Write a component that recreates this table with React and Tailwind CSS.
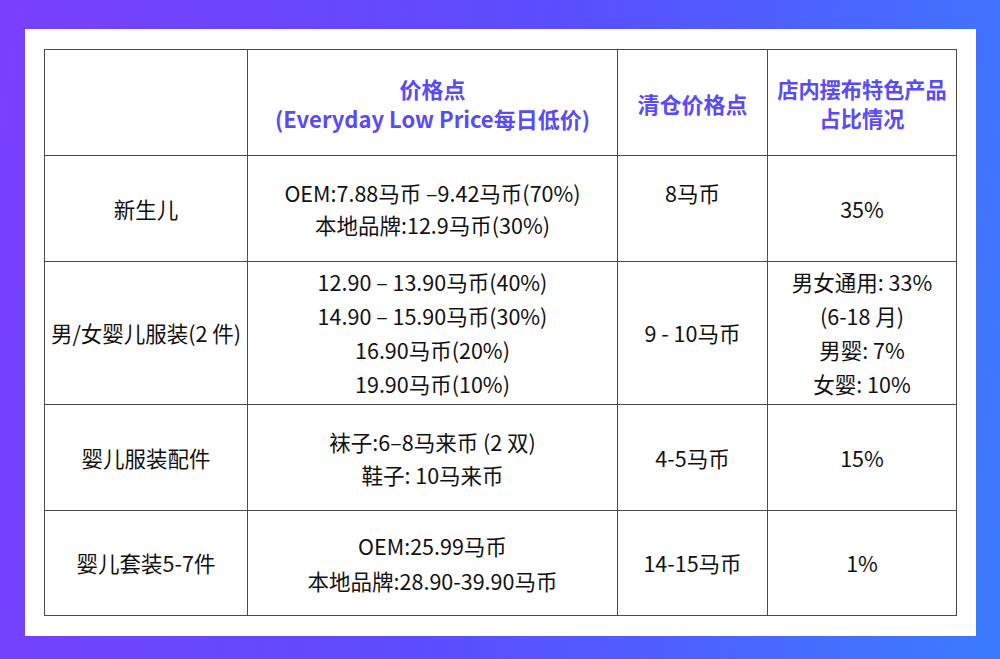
import React from "react";

const F = { fontFamily: '"Noto Sans CJK SC", "Noto Sans", sans-serif' };

function Cell({ w, h, children, head, lh }) {
  const base = head
    ? "text-[#5a4bf8] font-bold"
    : "text-[#111] text-[21.5px]";
  return (
    <div
      className={`${w} ${h} ${lh} ${base} border-r border-b border-[#4a4a4a] flex flex-col items-center justify-center text-center`}
    >
      {children}
    </div>
  );
}

const cols = ["w-[203px]", "w-[370px]", "w-[150px]", "w-[189px]"];

const rows = [
  {
    h: "h-[106px]",
    head: true,
    cells: [
      [[], "leading-[30px] text-[22px]"],
      [["价格点", "(Everyday Low Price每日低价)"], "leading-[30px] text-[22px]"],
      [["清仓价格点"], "leading-[30px] text-[22px]"],
      [["店内摆布特色产品", "占比情况"], "leading-[29px] text-[21.2px]"],
    ],
  },
  {
    h: "h-[106px]",
    cells: [
      [["新生儿"], "leading-[34px]"],
      [["OEM:7.88马币 –9.42马币(70%)", "本地品牌:12.9马币(30%)"], "leading-[32px]"],
      [["8马币", "\u00a0"], "leading-[32px]"],
      [["35%"], "leading-[34px]"],
    ],
  },
  {
    h: "h-[143px]",
    cells: [
      [["男/女婴儿服装(2 件)"], "leading-[34px]"],
      [["12.90 – 13.90马币(40%)", "14.90 – 15.90马币(30%)", "16.90马币(20%)", "19.90马币(10%)"], "leading-[34px]"],
      [["9 - 10马币"], "leading-[34px]"],
      [["男女通用: 33%", "(6-18 月)", "男婴: 7%", "女婴: 10%"], "leading-[34px]"],
    ],
  },
  {
    h: "h-[106px]",
    cells: [
      [["婴儿服装配件"], "leading-[34px]"],
      [["袜子:6–8马来币 (2 双)", "鞋子: 10马来币"], "leading-[33px]"],
      [["4-5马币"], "leading-[34px]"],
      [["15%"], "leading-[34px]"],
    ],
  },
  {
    h: "h-[105px]",
    cells: [
      [["婴儿套装5-7件"], "leading-[34px]"],
      [["OEM:25.99马币", "本地品牌:28.90-39.90马币"], "leading-[35px]"],
      [["14-15马币"], "leading-[34px]"],
      [["1%"], "leading-[34px]"],
    ],
  },
];

export default function App() {
  return (
    <div
      style={F}
      className="w-[1000px] h-[659px] bg-[linear-gradient(100deg,#7a3ffd_0%,#5b4dff_50%,#3b7cff_100%)] pt-[29px] pl-[25px]"
    >
      <div className="w-[951px] h-[607px] bg-white pt-[20px] pl-[19px]">
        <div className="w-[913px] border-l border-t border-[#4a4a4a] flex flex-col">
          {rows.map((r, i) => (
            <div key={i} className="flex">
              {r.cells.map(([c, lh], j) => (
                <Cell key={j} w={cols[j]} h={r.h} head={r.head} lh={lh}>
                  {c.map((t, k) => (
                    <div key={k}>{t}</div>
                  ))}
                </Cell>
              ))}
            </div>
          ))}
        </div>
      </div>
    </div>
  );
}
